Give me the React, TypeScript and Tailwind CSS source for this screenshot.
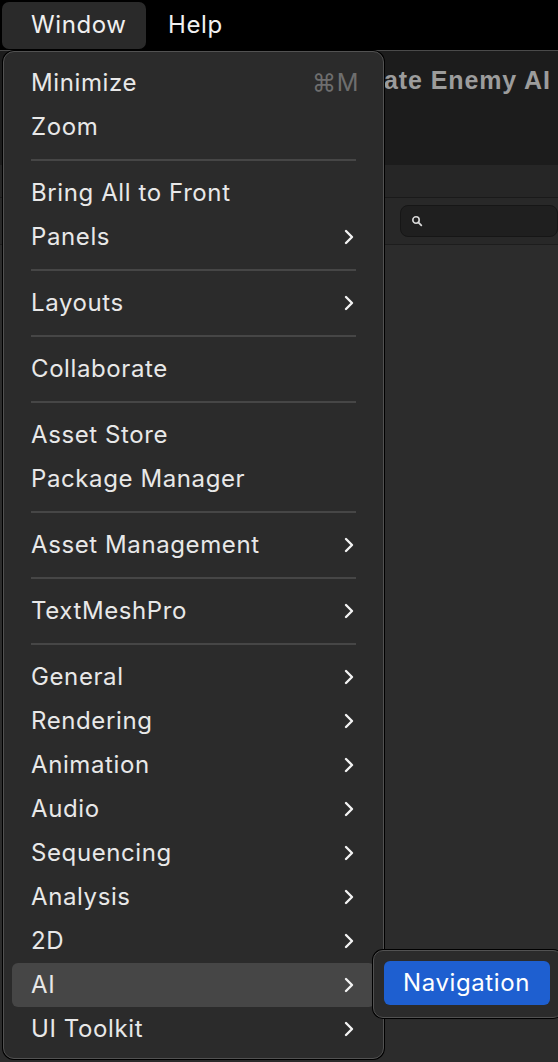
import React from 'react'

type Item = { label: string; sub?: boolean; shortcut?: string; active?: boolean } | 'sep'

const items: Item[] = [
    { label: 'Minimize', shortcut: '⌘M' },
    { label: 'Zoom' },
    'sep',
    { label: 'Bring All to Front' },
    { label: 'Panels', sub: true },
    'sep',
    { label: 'Layouts', sub: true },
    'sep',
    { label: 'Collaborate' },
    'sep',
    { label: 'Asset Store' },
    { label: 'Package Manager' },
    'sep',
    { label: 'Asset Management', sub: true },
    'sep',
    { label: 'TextMeshPro', sub: true },
    'sep',
    { label: 'General', sub: true },
    { label: 'Rendering', sub: true },
    { label: 'Animation', sub: true },
    { label: 'Audio', sub: true },
    { label: 'Sequencing', sub: true },
    { label: 'Analysis', sub: true },
    { label: '2D', sub: true },
    { label: 'AI', sub: true, active: true },
    { label: 'UI Toolkit', sub: true },
]

function Chevron() {
    return (
        <svg width="12" height="18" viewBox="0 0 12 18" fill="none">
            <path d="M3 3l6 6-6 6" stroke="#f2f2f2" strokeWidth="2.4" strokeLinecap="round" strokeLinejoin="round" />
        </svg>
    )
}

export default function App() {
    return (
        <div className="relative w-[558px] h-[1062px] overflow-hidden bg-black text-[#e8e8e8] tracking-[0.6px]" style={{ fontFamily: 'Inter, "Open Sans", sans-serif' }}>
            {/* menu bar */}
            <div className="flex items-center h-[50px] bg-black text-[24px] text-[#f0f0f0]">
                <div className="ml-[2px] h-[47px] w-[144px] rounded-[7px] bg-[#2a2a2a] flex items-center pl-[29px]">Window</div>
                <div className="ml-[22px]">Help</div>
            </div>

            {/* app window behind */}
            <div className="flex flex-col h-[1012px] border-t border-[#4a4a4a]">
                <div className="h-[114px] bg-[#1c1c1c] pl-[384px] pt-[11px]">
                    <span className="text-[25px] font-bold text-[#9c9c9c] whitespace-nowrap tracking-[0.9px]" style={{ fontFamily: '"Liberation Sans", Arial, sans-serif' }}>ate Enemy AI</span>
                </div>
                <div className="h-[33px] bg-[#262626] border-b border-[#1a1a1a]"></div>
                <div className="h-[47px] bg-[#282828] flex items-center pl-[400px] border-b border-[#1d1d1d]">
                    <div className="h-[32px] w-[170px] rounded-[8px] bg-[#1f1f1f] border border-[#161616] flex items-center pl-[10px]">
                        <svg width="12" height="12" viewBox="0 0 12 12" fill="none">
                            <circle cx="5" cy="5" r="3.2" stroke="#d8d8d8" strokeWidth="1.6" />
                            <path d="M7.3 7.3l3 3" stroke="#d8d8d8" strokeWidth="1.8" strokeLinecap="round" />
                        </svg>
                    </div>
                </div>
                <div className="flex-1 bg-[#2c2c2c]"></div>
            </div>

            {/* dropdown */}
            <div className="absolute left-[3px] top-[51px] w-[381px] h-[1008px] rounded-[11px] bg-[#2b2b2b] border border-[#525252] shadow-[0_0_0_1px_#000] pt-[9px] px-[8px]">
                {items.map((it, i) =>
                    it === 'sep' ? (
                        <div key={i} className="h-[22px] flex items-center px-[19px]">
                            <div className="h-[2px] w-full bg-[#464646]"></div>
                        </div>
                    ) : (
                        <div key={i} className={`h-[44px] flex items-center justify-between pl-[19px] pr-[20px] rounded-[6px] text-[24px] ${it.active ? 'bg-[#464646]' : ''}`}>
                            <span>{it.label}</span>
                            {it.shortcut && <span className="text-[#6e6e6e] -mr-[4px]">{it.shortcut}</span>}
                            {it.sub && <Chevron />}
                        </div>
                    )
                )}
            </div>

            {/* submenu */}
            <div className="absolute left-[373px] top-[950px] w-[190px] h-[68px] rounded-[10px] bg-[#2b2b2b] border border-[#525252] shadow-[0_0_0_1px_#000] p-[10px]">
                <div className="h-[44px] w-[166px] rounded-[6px] bg-[#1e5fd0] flex items-center pl-[19px] text-[24px] text-white">Navigation</div>
            </div>
        </div>
    )
}
